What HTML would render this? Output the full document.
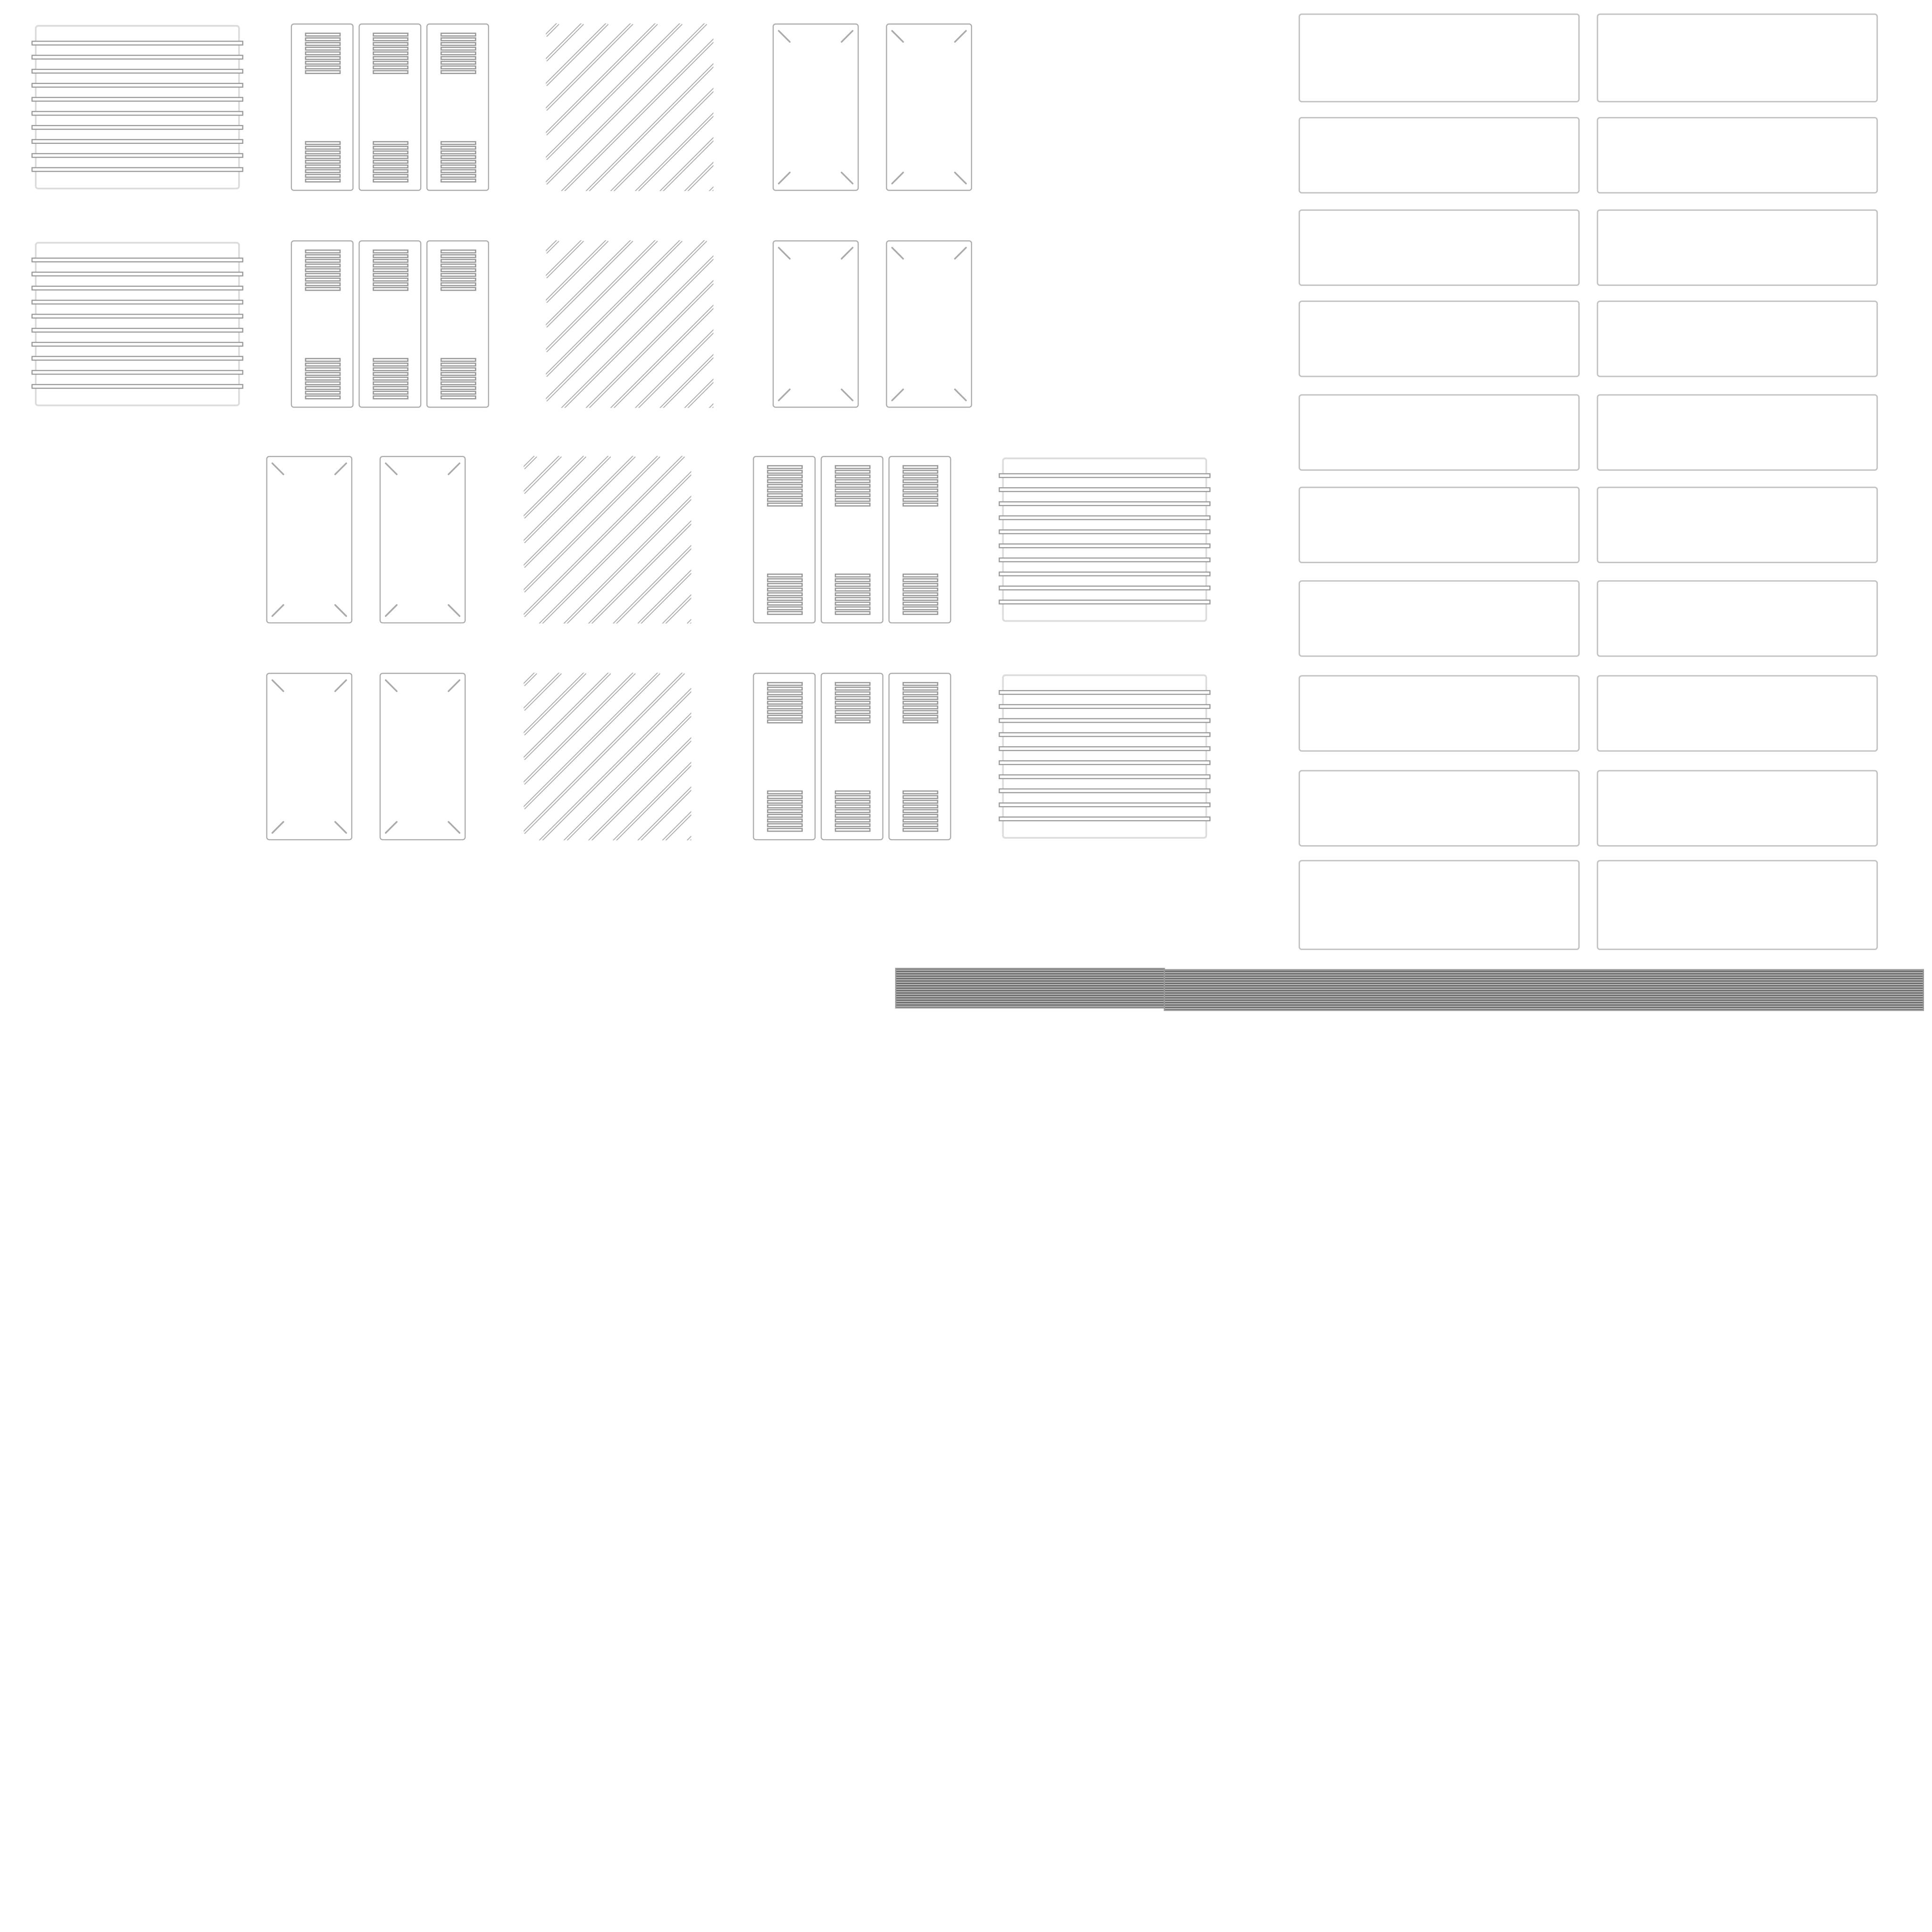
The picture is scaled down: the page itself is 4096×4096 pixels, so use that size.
<!DOCTYPE html>
<html><head><meta charset="utf-8"><style>html,body{margin:0;padding:0;background:#fff}svg{display:block}</style></head>
<body>
<svg width="4096" height="4096" viewBox="0 0 1568 1568" xmlns="http://www.w3.org/2000/svg">
<defs>
<pattern id="st" width="4" height="1.95" patternUnits="userSpaceOnUse">
<rect width="4" height="1.95" fill="#707070"/><rect y="1.35" width="4" height="0.4" fill="#fff"/>
</pattern>
<clipPath id="hc"><rect x="0" y="0" width="136" height="136"/></clipPath>
<g id="rad">
<rect x="3" y="2" width="165" height="132" rx="2" fill="none" stroke="#dcdcdc" stroke-width="1.4"/>
<g fill="#fff" stroke="#999" stroke-width="0.9">
<rect x="0" y="14.5" width="171" height="3"/><rect x="0" y="25.9" width="171" height="3"/>
<rect x="0" y="37.3" width="171" height="3"/><rect x="0" y="48.7" width="171" height="3"/>
<rect x="0" y="60.1" width="171" height="3"/><rect x="0" y="71.5" width="171" height="3"/>
<rect x="0" y="82.9" width="171" height="3"/><rect x="0" y="94.3" width="171" height="3"/>
<rect x="0" y="105.7" width="171" height="3"/><rect x="0" y="117.1" width="171" height="3"/>
</g></g>
<g id="vent" fill="#fff" stroke="#999" stroke-width="1">
<rect x="12" y="0" width="28" height="2.2"/><rect x="12" y="3.8" width="28" height="2.2"/>
<rect x="12" y="7.6" width="28" height="2.2"/><rect x="12" y="11.4" width="28" height="2.2"/>
<rect x="12" y="15.2" width="28" height="2.2"/><rect x="12" y="19" width="28" height="2.2"/>
<rect x="12" y="22.8" width="28" height="2.2"/><rect x="12" y="26.6" width="28" height="2.2"/>
<rect x="12" y="30.4" width="28" height="2.2"/>
</g>
<g id="locker">
<rect x="0.5" y="0.5" width="50" height="135" rx="2" fill="#fff" stroke="#aaa" stroke-width="0.9"/>
<use href="#vent" y="8"/><use href="#vent" y="96"/>
</g>
<g id="trio"><use href="#locker"/><use href="#locker" x="55"/><use href="#locker" x="110"/></g>
<g id="hatch"><g clip-path="url(#hc)">
<g stroke="#aaa" stroke-width="2.6">
<path d="M10 0L0 10M30 0L0 30M50 0L0 50M70 0L0 70M90 0L0 90M110 0L0 110M130 0L0 130M150 0L0 150M170 0L0 170M190 0L0 190M210 0L0 210M230 0L0 230M250 0L0 250M270 0L0 270"/></g>
<g stroke="#fff" stroke-width="1.2">
<path d="M10 0L0 10M30 0L0 30M50 0L0 50M70 0L0 70M90 0L0 90M110 0L0 110M130 0L0 130M150 0L0 150M170 0L0 170M190 0L0 190M210 0L0 210M230 0L0 230M250 0L0 250M270 0L0 270"/></g>
</g></g>
<g id="panel">
<rect x="0.5" y="0.5" width="69" height="135" rx="2" fill="#fff" stroke="#aaa" stroke-width="0.9"/>
<g stroke="#aaa" stroke-width="1.3" stroke-linecap="round">
<path d="M5 6L14 15M65 6L56 15M5 130L14 121M65 130L56 121"/></g>
</g>
</defs>

<use href="#rad" x="26" y="19"/>
<use href="#trio" x="236" y="19"/>
<use href="#hatch" x="443" y="19"/>
<use href="#panel" x="627" y="19"/>
<use href="#panel" x="719" y="19"/>
<use href="#rad" x="26" y="195"/>
<use href="#trio" x="236" y="195"/>
<use href="#hatch" x="443" y="195"/>
<use href="#panel" x="627" y="195"/>
<use href="#panel" x="719" y="195"/>
<use href="#panel" x="216" y="370"/>
<use href="#panel" x="308" y="370"/>
<use href="#hatch" x="425" y="370"/>
<use href="#trio" x="611" y="370"/>
<use href="#rad" x="811" y="370"/>
<use href="#panel" x="216" y="546"/>
<use href="#panel" x="308" y="546"/>
<use href="#hatch" x="425" y="546"/>
<use href="#trio" x="611" y="546"/>
<use href="#rad" x="811" y="546"/>

<g fill="#fff" stroke="#c2c2c2" stroke-width="1.1">
<rect x="1054.5" y="11.5" width="227" height="71" rx="2"/><rect x="1296.5" y="11.5" width="227" height="71" rx="2"/>
<rect x="1054.5" y="95.5" width="227" height="61" rx="2"/><rect x="1296.5" y="95.5" width="227" height="61" rx="2"/>
<rect x="1054.5" y="170.5" width="227" height="61" rx="2"/><rect x="1296.5" y="170.5" width="227" height="61" rx="2"/>
<rect x="1054.5" y="244.5" width="227" height="61" rx="2"/><rect x="1296.5" y="244.5" width="227" height="61" rx="2"/>
<rect x="1054.5" y="320.5" width="227" height="61" rx="2"/><rect x="1296.5" y="320.5" width="227" height="61" rx="2"/>
<rect x="1054.5" y="395.5" width="227" height="61" rx="2"/><rect x="1296.5" y="395.5" width="227" height="61" rx="2"/>
<rect x="1054.5" y="471.5" width="227" height="61" rx="2"/><rect x="1296.5" y="471.5" width="227" height="61" rx="2"/>
<rect x="1054.5" y="548.5" width="227" height="61" rx="2"/><rect x="1296.5" y="548.5" width="227" height="61" rx="2"/>
<rect x="1054.5" y="625.5" width="227" height="61" rx="2"/><rect x="1296.5" y="625.5" width="227" height="61" rx="2"/>
<rect x="1054.5" y="698.5" width="227" height="72" rx="2"/><rect x="1296.5" y="698.5" width="227" height="72" rx="2"/>
</g>

<rect x="727" y="786" width="218" height="32" fill="url(#st)" stroke="#9a9a9a" stroke-width="1"/>
<rect x="945" y="787" width="616" height="33" fill="url(#st)" stroke="#9a9a9a" stroke-width="1"/>
</svg>
</body></html>
